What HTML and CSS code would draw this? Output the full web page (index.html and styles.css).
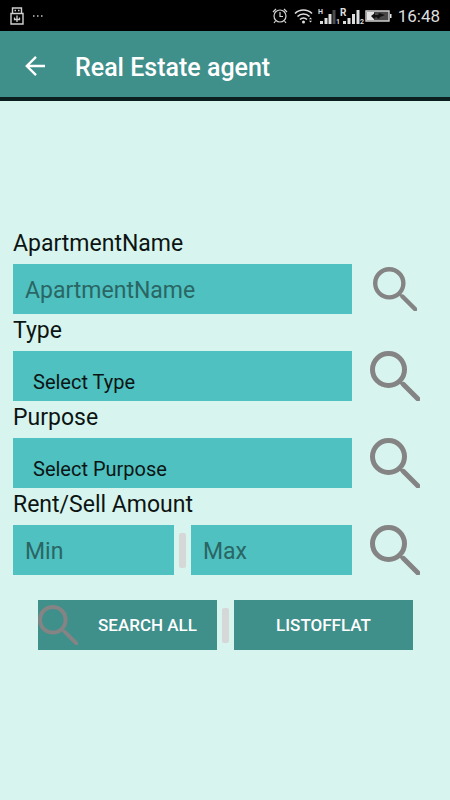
FILE: index.html
```html
<!DOCTYPE html>
<html lang="en">
<head>
<meta charset="utf-8">
<meta name="viewport" content="width=device-width, initial-scale=1">
<title>Real Estate agent</title>
<link rel="stylesheet" href="styles.css">
</head>
<body>
<svg class="defs" width="0" height="0" aria-hidden="true">
  <symbol id="magnifier" viewBox="0 0 50 50">
    <circle cx="18.5" cy="18.5" r="16" fill="none" stroke="currentColor" stroke-width="5"/>
    <path d="M30.5 31 32 33" stroke="currentColor" stroke-width="3"/>
    <path d="M33.5 33.5 48 48" stroke="currentColor" stroke-width="5" stroke-linecap="round"/>
  </symbol>
</svg>

<div class="status">
  <svg class="usb" width="14" height="18" viewBox="0 0 14 18" aria-hidden="true">
    <path d="M2.5 6V1h9v5M1 6.500h12v10.500H1z" fill="none" stroke="#d0d0d0" stroke-width="1.400"/>
    <path d="M4.500 3.500h1.500M8 3.500h1.500" stroke="#d0d0d0" stroke-width="1.500"/>
    <path d="M7 8.500v6.500M4.500 10.500v2h5v-2" fill="none" stroke="#d0d0d0" stroke-width="1.300"/>
  </svg>
  <svg width="12" height="4" viewBox="0 0 12 4" aria-hidden="true">
    <path d="M1 2h1.500M5 2h1.500M9 2h1.500" stroke="#c4c4c4" stroke-width="1.500"/>
  </svg>
  <div class="tray">
    <svg width="16" height="18" viewBox="0 0 16 18" fill="none" stroke="#d4d4d4" stroke-width="1.200" aria-hidden="true">
      <circle cx="8" cy="9" r="6"/>
      <path d="M8 5v4.500h3M1 5l3-3M12 2l3 3M3.500 14 2 16M12.500 14l1.500 2"/>
    </svg>
    <svg class="wifi" width="20" height="18" viewBox="0 0 20 18" fill="none" stroke="#dedede" stroke-width="1.600" aria-hidden="true">
      <path d="M1 6.500a12 12 0 0 1 17 0M3.500 9.500a8.500 8.500 0 0 1 12 0M6 12.500a5 5 0 0 1 7 0"/>
      <circle cx="9.500" cy="15" r="1.500" fill="#dedede" stroke="none"/>
      <path d="m16.500 10.500 1.500 1.800h-3zM16.500 15.500l1.500-1.800h-3z" fill="#dedede" stroke="none"/>
    </svg>
    <svg class="signal" width="22" height="20" viewBox="0 0 22 20" aria-hidden="true">
      <path d="M2 15h3v3H2zM6.500 12h3v6h-3zM10.500 8h3v10h-3z" fill="#dedede"/>
      <path d="M14.500 4h3v14h-3z" fill="#4c4c4c"/>
      <text x="0" y="8" class="tag">H</text>
      <text x="18" y="18" class="tag">1</text>
    </svg>
    <svg class="signal" width="25" height="20" viewBox="0 0 25 20" aria-hidden="true">
      <path d="M3 15h3v3H3zM7.500 12h3v6h-3zM12 8h3v10h-3zM16.500 4h3v14h-3z" fill="#dedede"/>
      <text x="0" y="10" class="tag roaming">R</text>
      <text x="20" y="18" class="tag">2</text>
    </svg>
    <svg width="27" height="12" viewBox="0 0 27 12" aria-hidden="true">
      <path d="M1 1h23v10H1z" fill="#484848" stroke="#cfcfcf" stroke-width="1.400"/>
      <path d="M2 2h7v8H2zM25 4h1.500v4H25z" fill="#e4e4e4"/>
      <path d="m6 6 4-3v2h3l1-2 6 2-5 2-1 2-3-2-2 2z" fill="#111"/>
    </svg>
    <span class="clock">16:48</span>
  </div>
</div>

<header class="appbar">
  <button class="back" type="button" aria-label="Back">
    <svg width="22" height="22" viewBox="0 0 22 22" fill="none" stroke="#fff" stroke-width="2.400" aria-hidden="true">
      <path d="M20 11H2M11 1.800 1.800 11l9.200 9.200"/>
    </svg>
  </button>
  <h1>Real Estate agent</h1>
</header>

<main>
  <form>
    <label for="name">ApartmentName</label>
    <div class="row">
      <input id="name" type="text" placeholder="ApartmentName">
      <button class="find" type="button" aria-label="Search by name"><svg class="small"><use href="#magnifier"/></svg></button>
    </div>
    <label for="type">Type</label>
    <div class="row">
      <select id="type"><option>Select Type</option></select>
      <button class="find" type="button" aria-label="Search by type"><svg><use href="#magnifier"/></svg></button>
    </div>
    <label for="purpose">Purpose</label>
    <div class="row">
      <select id="purpose"><option>Select Purpose</option></select>
      <button class="find" type="button" aria-label="Search by purpose"><svg><use href="#magnifier"/></svg></button>
    </div>
    <label for="min">Rent/Sell Amount</label>
    <div class="row">
      <div class="range">
        <input id="min" type="text" placeholder="Min">
        <span class="divider"></span>
        <input type="text" placeholder="Max" aria-label="Maximum amount">
      </div>
      <button class="find" type="button" aria-label="Search by amount"><svg><use href="#magnifier"/></svg></button>
    </div>
    <div class="actions">
      <button class="action" type="button"><svg><use href="#magnifier"/></svg><span>SEARCH ALL</span></button>
      <span class="divider"></span>
      <button class="action" type="button"><span>LISTOFFLAT</span></button>
    </div>
  </form>
</main>
</body>
</html>
```
FILE: styles.css
```css
* {
  box-sizing: border-box;
}

body {
  margin: 0;
  min-height: 100vh;
  background: #d8f4ee;
  color: #0c1413;
  font-family: Roboto, "Liberation Sans", sans-serif;
}

button,
input,
select {
  margin: 0;
  border: 0;
  border-radius: 0;
  font-family: inherit;
}

button {
  padding: 0;
  background: none;
  color: inherit;
}

svg {
  display: block;
  flex: none;
}

.defs {
  position: absolute;
}

.status {
  display: flex;
  align-items: center;
  gap: 8px;
  height: 31px;
  padding: 0 10px;
  background: #000;
}

.tray {
  display: flex;
  align-items: center;
  margin-left: auto;
}

.wifi {
  margin: 0 4px 0 6px;
}

.tag {
  fill: #dedede;
  font-size: 7px;
  font-weight: 700;
}

.roaming {
  font-size: 10px;
}

.clock {
  margin-left: 6px;
  color: #dedede;
  font-size: 17px;
  line-height: 32px;
}

.appbar {
  display: flex;
  align-items: center;
  gap: 28px;
  height: 70px;
  padding: 4px 25px 0;
  border-bottom: 4px solid #0b1f1e;
  background: #3f8f8b;
  color: #fff;
}

h1 {
  margin: 0;
  padding-top: 4px;
  font-size: 25px;
  font-weight: 500;
  line-height: 32px;
}

main {
  padding: 126px 12px 0 13px;
}

label {
  display: block;
  padding-bottom: 3px;
  font-size: 23px;
  line-height: 34px;
}

.row {
  display: flex;
  align-items: center;
}

input,
select {
  flex: 1;
  min-width: 0;
  height: 50px;
  background: #4fc1c1;
  color: #0c1413;
}

input {
  padding: 2px 12px 0;
  font-size: 23px;
}

input::placeholder {
  color: #2a6664;
  opacity: 1;
}

select {
  appearance: none;
  padding: 12px 20px 0;
  font-size: 20px;
}

.range {
  display: flex;
  flex: 1;
  align-items: center;
  gap: 5px;
  min-width: 0;
}

.divider {
  flex: none;
  width: 7px;
  height: 35px;
  border-radius: 2px;
  background: #d6d7d7;
}

.find {
  display: flex;
  flex: none;
  align-items: center;
  justify-content: center;
  width: 86px;
  height: 50px;
  color: #848484;
}

.find svg {
  width: 50px;
  height: 50px;
}

.find .small {
  width: 44px;
  height: 44px;
}

.actions {
  display: flex;
  align-items: center;
  gap: 5px;
  padding: 25px 25px 0;
}

.action {
  display: flex;
  flex: 1;
  align-items: center;
  height: 50px;
  background: #3f8f8b;
  color: #fff;
  font-size: 17px;
  font-weight: 500;
}

.action svg {
  width: 40px;
  height: 40px;
  color: #848484;
}

.action span {
  flex: 1;
  text-align: center;
}
```
